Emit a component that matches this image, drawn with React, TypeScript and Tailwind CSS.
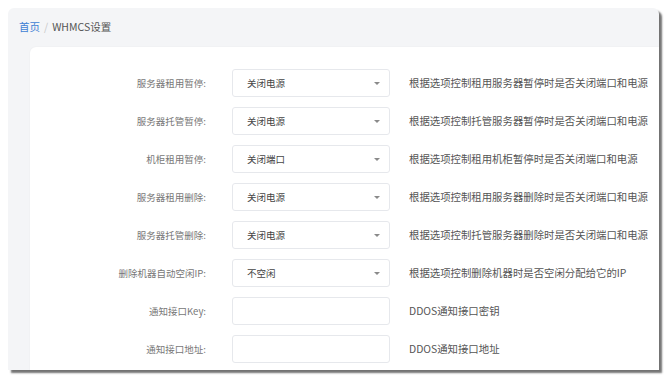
const rows = [
  { label: '服务器租用暂停:', value: '关闭电源', desc: '根据选项控制租用服务器暂停时是否关闭端口和电源', select: true },
  { label: '服务器托管暂停:', value: '关闭电源', desc: '根据选项控制托管服务器暂停时是否关闭端口和电源', select: true },
  { label: '机柜租用暂停:', value: '关闭端口', desc: '根据选项控制租用机柜暂停时是否关闭端口和电源', select: true },
  { label: '服务器租用删除:', value: '关闭电源', desc: '根据选项控制租用服务器删除时是否关闭端口和电源', select: true },
  { label: '服务器托管删除:', value: '关闭电源', desc: '根据选项控制托管服务器删除时是否关闭端口和电源', select: true },
  { label: '删除机器自动空闲IP:', value: '不空闲', desc: '根据选项控制删除机器时是否空闲分配给它的IP', select: true },
  { label: '通知接口Key:', value: '', desc: 'DDOS通知接口密钥', select: false },
  { label: '通知接口地址:', value: '', desc: 'DDOS通知接口地址', select: false },
];

function FieldBox({ value, select }: { value: string; select: boolean }) {
  return (
    <div className="flex h-[28px] w-[158px] shrink-0 items-center justify-between rounded-[3px] border border-[#e6e8ec] bg-white pl-[14px] pr-[9px]">
      <span className="text-[9.5px] text-[#444]">{value}</span>
      {select && (
        <span className="h-0 w-0 border-l-[3px] border-r-[3px] border-t-[3px] border-l-transparent border-r-transparent border-t-[#8a8a8a]" />
      )}
    </div>
  );
}

export default function App() {
  return (
    <div className="h-[382px] w-[671px] bg-white pl-2 pt-2 font-['Noto_Sans_CJK_SC','Noto_Sans',sans-serif]">
      <div className="flex h-[362px] w-[651px] flex-col overflow-hidden rounded-t-[6px] bg-[#f4f5f7] shadow-[3px_3px_2px_rgba(0,0,0,0.55)]">
        {/* Breadcrumb */}
        <div className="flex h-[39px] shrink-0 items-center gap-[4px] px-[11px] pb-[2px] text-[10.5px]">
          <span className="text-[#3f7fd4]">首页</span>
          <span className="text-[#c8c8c8]">/</span>
          <span className="text-[#555]">WHMCS设置</span>
        </div>

        {/* Card */}
        <div className="ml-[22px] flex-1 rounded-tl-[6px] bg-white pt-[22px] shadow-[0_0_2px_rgba(0,0,0,0.06)]">
          {rows.map((row) => (
            <div key={row.label} className="mb-[10px] flex h-[28px] items-center">
              <div className="w-[177px] shrink-0 pr-[1px] text-right text-[9.5px] text-[#777]">{row.label}</div>
              <div className="ml-[25px]">
                <FieldBox value={row.value} select={row.select} />
              </div>
              <div className="ml-[19px] whitespace-nowrap text-[10.4px] text-[#555]">{row.desc}</div>
            </div>
          ))}
        </div>
      </div>
    </div>
  );
}
